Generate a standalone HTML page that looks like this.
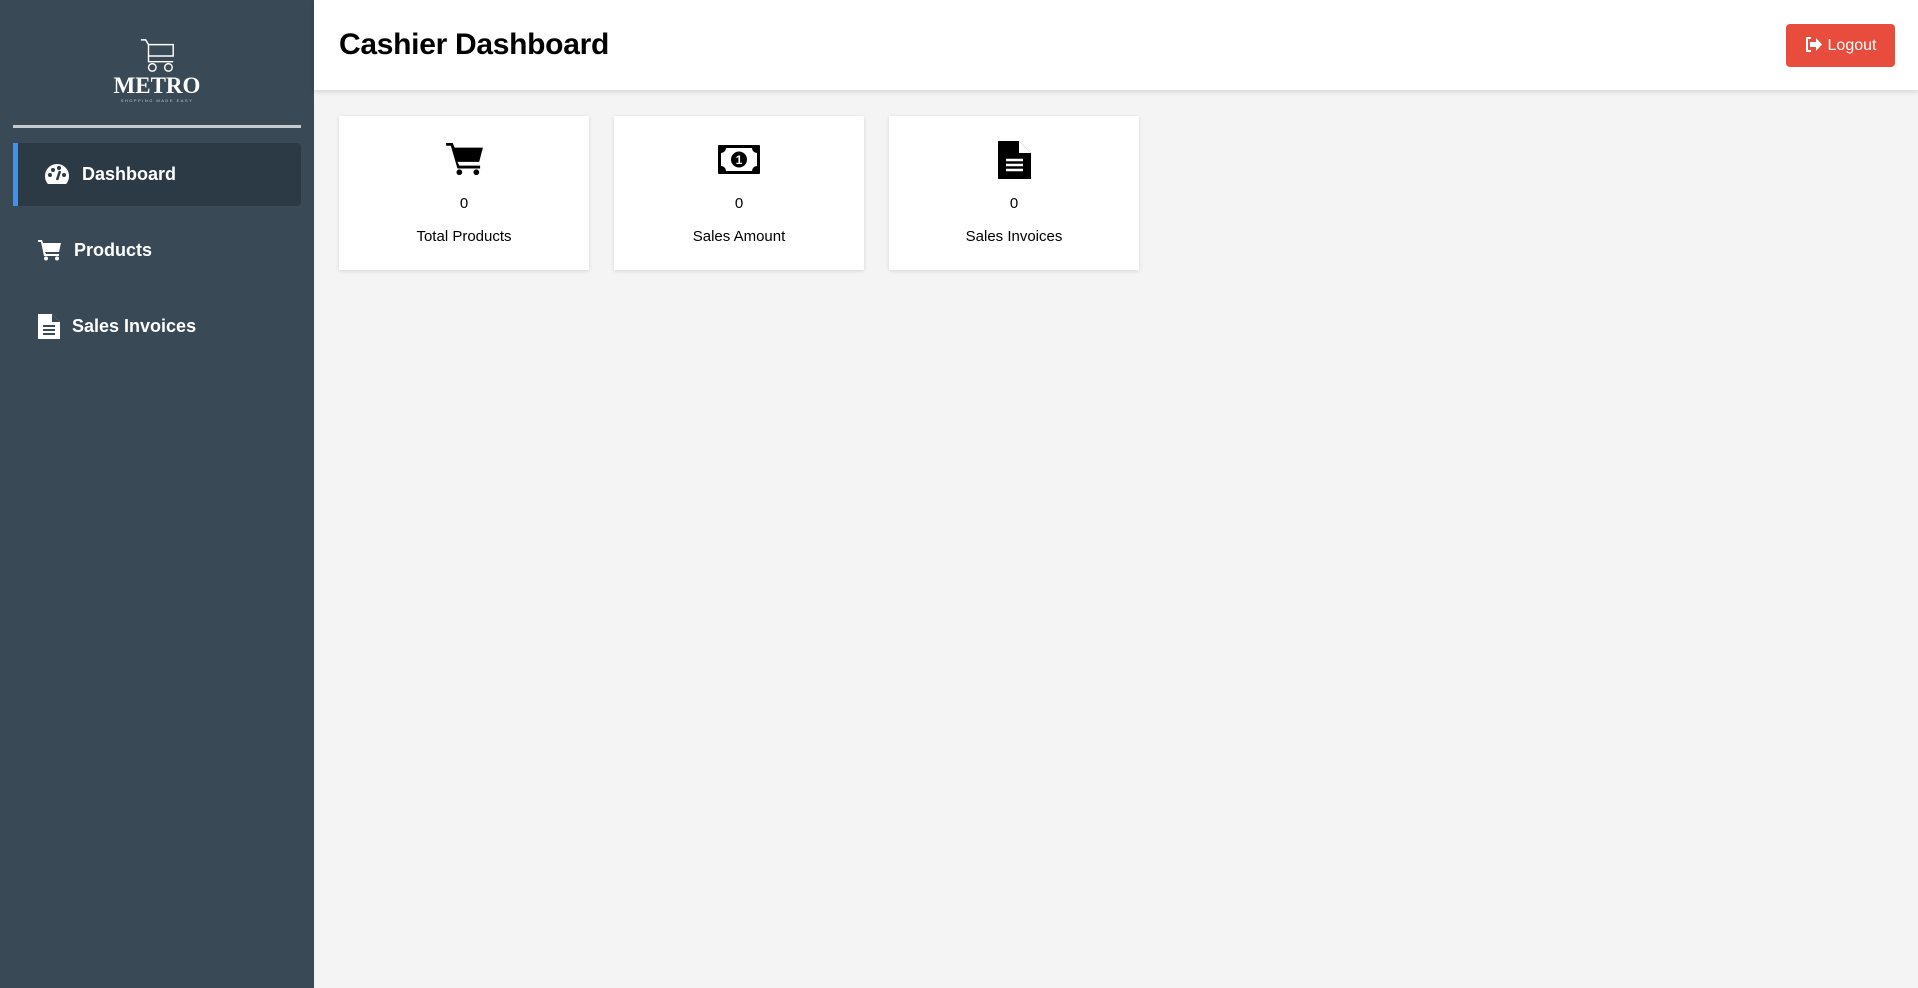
<!DOCTYPE html><html><head><style>
body{margin:0;width:1918px;height:988px;font-family:"Liberation Sans",sans-serif;background:#f4f4f4;position:relative;overflow:hidden}
.sb{position:absolute;left:0;top:0;width:314px;height:988px;background:#394955}
.hd{position:absolute;left:314px;top:0;right:0;height:90px;background:#fff;box-shadow:0 2px 5px rgba(0,0,0,.12)}
.hd h1{position:absolute;left:25px;top:28px;margin:0;font-size:30px;font-weight:bold;color:#000;letter-spacing:-0.3px}
.lo{position:absolute;right:23px;top:24px;width:109px;height:43px;background:#e74c3c;border-radius:4px;color:#fff;font-size:16px;line-height:43px;text-align:center}
.div{position:absolute;left:13px;top:125px;width:288px;height:3px;background:#c8cbce}
.it{position:absolute;left:13px;width:288px;height:63px;color:#fff;font-weight:bold;font-size:18px;line-height:63px}
.act{background:#2c3a45;border-left:5px solid #4a90e2;border-radius:0 4px 4px 0;box-sizing:border-box}
.card{position:absolute;top:116px;width:250px;height:154px;background:#fff;box-shadow:0 1px 4px rgba(0,0,0,.12);text-align:center;font-size:15px;color:#000}
.card svg{position:absolute;left:105px;top:26px}
.n{position:absolute;top:79px;left:0;right:0}.l{position:absolute;top:112px;left:0;right:0}
</style></head><body>
<div class="sb">
<svg style="position:absolute;left:138px;top:37px" width="40" height="38" viewBox="0 0 40 40" fill="none" stroke="#fff" stroke-width="1.5"><path d="M2 3h5l3 5v18h26M10 8h26v12H10"/><circle cx="14" cy="32" r="4"/><circle cx="31" cy="32" r="4"/></svg>
<div style="position:absolute;left:0;width:314px;top:73px;text-align:center;color:#fff;font-family:'Liberation Serif',serif;font-weight:bold;font-size:23px">METRO</div>
<div style="position:absolute;left:0;width:314px;top:98px;text-align:center;color:#ccc;font-size:4px;letter-spacing:1.5px">SHOPPING MADE EASY</div>
<div class="div"></div>
<div class="it act" style="top:143px"><svg style="position:absolute;left:26px;top:20px" width="26" height="23" viewBox="0 0 26 23"><path d="M13 1A12 12 0 0 0 1 13c0 3 1 6 3 8h18c2-2 3-5 3-8A12 12 0 0 0 13 1z" fill="#fff"/><circle cx="6" cy="12" r="2" fill="#2c3a45"/><circle cx="9" cy="7" r="2" fill="#2c3a45"/><circle cx="15" cy="5" r="2" fill="#2c3a45"/><circle cx="20" cy="12" r="2" fill="#2c3a45"/><path d="M16 8l-3 9" stroke="#2c3a45" stroke-width="2.5"/></svg><span style="position:absolute;left:64px">Dashboard</span></div>
<div class="it" style="top:219px"><svg style="position:absolute;left:25px;top:20px" width="24" height="22" viewBox="0 0 24 22" fill="#fff"><path d="M0 1h4l1 3h18l-2 9H7l1 2h13v2H6L3 3H0z"/><circle cx="8" cy="19.5" r="2"/><circle cx="19" cy="19.5" r="2"/></svg><span style="position:absolute;left:61px">Products</span></div>
<div class="it" style="top:295px"><svg style="position:absolute;left:25px;top:18px" width="22" height="27" viewBox="0 0 22 27"><path d="M0 1h14l8 8v17H0z" fill="#fff"/><path d="M14 1v8h8" fill="#394955"/><path d="M5 13h12M5 17h12M5 21h12" stroke="#394955" stroke-width="2"/></svg><span style="position:absolute;left:59px">Sales Invoices</span></div>
</div>
<div class="hd"><h1>Cashier Dashboard</h1><div class="lo"><svg width="17" height="15" viewBox="0 0 17 15" style="vertical-align:-2px;margin-right:6px"><path d="M6 1H2v13h4" fill="none" stroke="#fff" stroke-width="2"/><path d="M5 5h6V1l6 6.5-6 6.5V10H5z" fill="#fff"/></svg>Logout</div></div>
<div class="card" style="left:339px"><svg width="38" height="34" viewBox="0 0 40 36" style="left:107px"><path d="M0 1h7l2 5h30l-4 15H12l2 4h22v3H12L5 4H0z"/><circle cx="14" cy="32" r="3"/><circle cx="32" cy="32" r="3"/></svg><div class="n">0</div><div class="l">Total Products</div></div>
<div class="card" style="left:614px"><svg width="42" height="36" viewBox="0 0 42 36" style="left:104px;top:24px"><rect x="0" y="5" width="42" height="29" rx="1"/><path d="M3 13a5 5 0 0 0 5-5h26a5 5 0 0 0 5 5v13a5 5 0 0 0-5 5H8a5 5 0 0 0-5-5z" fill="#fff"/><circle cx="21" cy="19.5" r="8"/><text x="21" y="24" font-size="12" font-weight="bold" fill="#fff" text-anchor="middle">1</text></svg><div class="n">0</div><div class="l">Sales Amount</div></div>
<div class="card" style="left:889px"><svg width="34" height="40" viewBox="0 0 34 40" style="left:109px;top:24px"><path d="M0 1h21l12 12v26H0z"/><path d="M21 1v12h12" fill="#fff"/><path d="M8 20h17M8 25h17M8 30h17" stroke="#fff" stroke-width="2.5"/></svg><div class="n">0</div><div class="l">Sales Invoices</div></div>
</body></html>
